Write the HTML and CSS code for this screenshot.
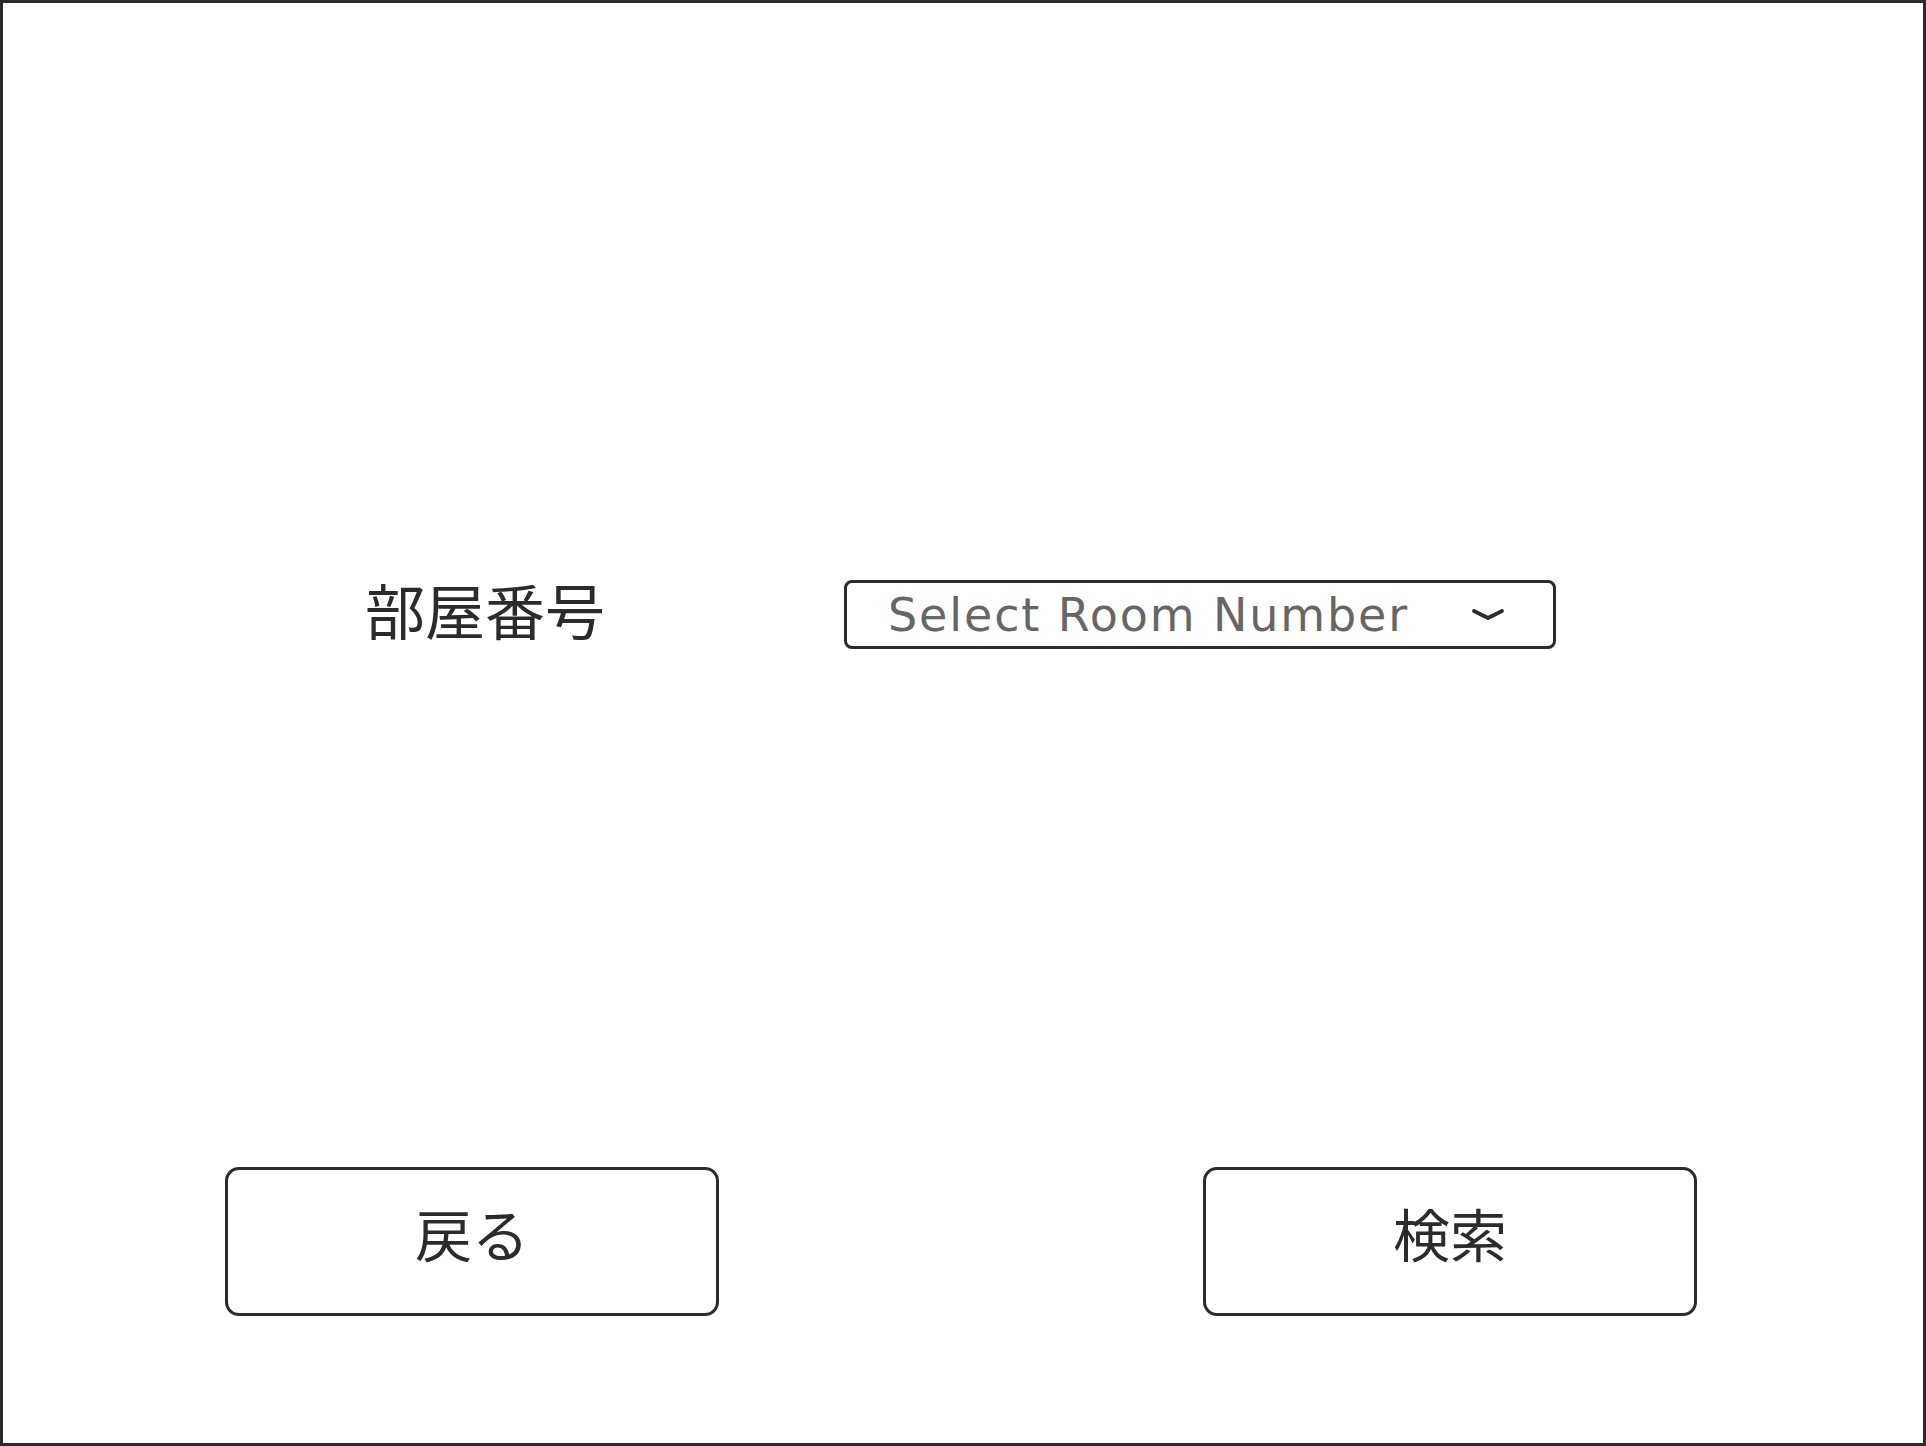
FILE: index.html
```html
<!DOCTYPE html>
<html lang="ja">
<head>
<meta charset="utf-8">
<title>部屋番号</title>
<link rel="stylesheet" href="styles.css">
</head>
<body>
<div class="frame">
  <div class="form-row">
    <div class="label">部屋番号</div>
    <div class="select">
      <span class="placeholder">Select Room Number</span>
      <svg class="chevron" width="34" height="14" viewBox="0 0 34 14"><polyline points="3,3 17,10 31,3" fill="none" stroke="#2b2b2b" stroke-width="3.8" stroke-linecap="round" stroke-linejoin="round"/></svg>
    </div>
  </div>
  <div class="buttons">
    <div class="btn">戻る</div>
    <div class="btn">検索</div>
  </div>
</div>
</body>
</html>
```

FILE: styles.css
```css
html, body {
  margin: 0;
  padding: 0;
  background: #ffffff;
}
.frame {
  box-sizing: border-box;
  width: 1926px;
  height: 1446px;
  border: 3px solid #2b2b2b;
  display: flex;
  flex-direction: column;
  font-family: "Noto Sans CJK JP", "Noto Sans", sans-serif;
  color: #2b2b2b;
}
.form-row {
  margin-top: 577px;
  padding-left: 362px;
  display: flex;
  align-items: center;
}
.label {
  width: 479px;
  font-size: 60px;
  line-height: 57px;
  padding-bottom: 12px;
}
.select {
  box-sizing: border-box;
  width: 712px;
  height: 69px;
  border: 3px solid #2b2b2b;
  border-radius: 8px;
  display: flex;
  align-items: center;
  justify-content: space-between;
  padding-left: 41px;
  padding-right: 48px;
}
.placeholder {
  font-family: "DejaVu Sans", "Open Sans", sans-serif;
  font-weight: 400;
  font-size: 46px;
  letter-spacing: 1.9px;
  color: #666666;
  line-height: 1;
}
.chevron {
  display: block;
}
.buttons {
  margin-top: 518px;
  padding-left: 222px;
  display: flex;
  gap: 484px;
}
.btn {
  box-sizing: border-box;
  width: 494px;
  height: 149px;
  border: 3px solid #2b2b2b;
  border-radius: 14px;
  display: flex;
  align-items: center;
  justify-content: center;
  font-size: 57px;
  padding-bottom: 20px;
}
```
